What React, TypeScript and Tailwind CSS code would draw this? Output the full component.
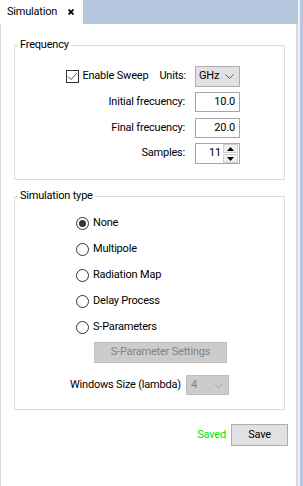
import React from 'react';

function Chevron({ color = '#5c5c5c' }: { color?: string }) {
  return (
    <svg width="9" height="5" viewBox="0 0 9 5" className="shrink-0">
      <polyline points="0.5,0.5 4.5,4.5 8.5,0.5" fill="none" stroke={color} strokeWidth="1" />
    </svg>
  );
}

function Radio({ label, checked = false }: { label: string; checked?: boolean }) {
  return (
    <div className="flex items-center h-[16px]">
      <span className="w-[13px] h-[13px] rounded-full border border-[#333333] bg-white flex items-center justify-center">
        {checked && <span className="w-[7px] h-[7px] rounded-full bg-[#333333]" />}
      </span>
      <span className="ml-[4px]">{label}</span>
    </div>
  );
}

function FieldRow({ label, value }: { label: string; value: string }) {
  return (
    <div className="flex items-center justify-end h-[20px]">
      <span className="mr-[10px]">{label}</span>
      <div className="w-[45px] h-[20px] border border-[#a6a6a6] bg-white flex items-center justify-end pr-[4px]">
        {value}
      </div>
    </div>
  );
}

export default function App() {
  return (
    <div className="w-[303px] h-[486px] flex bg-[#b4c7de] text-[11px] tracking-[-0.2px] text-black font-['Roboto',sans-serif] overflow-hidden">
      <div className="w-[298px] flex flex-col">
        {/* Tab bar */}
        <div className="h-[24px] flex shrink-0">
          <div className="w-[83px] bg-white flex items-center pl-[7px]">
            <span>Simulation</span>
            <svg width="6" height="6" viewBox="0 0 6 6" className="ml-[11px]">
              <path d="M0.5 0.5 L5.5 5.5 M5.5 0.5 L0.5 5.5" stroke="#000" strokeWidth="1.8" />
            </svg>
          </div>
        </div>

        {/* Panel */}
        <div className="flex-1 bg-white border-l border-r-2 border-[#d9d9d9] pt-[13px] pl-[13px] pr-[11px] flex flex-col">
          <fieldset className="border border-[#dcdcdc]">
            <legend className="ml-[3px] px-[2px] leading-[16px]">Frequency</legend>
            <div className="pt-[13px] pb-[15px] pr-[44px] flex flex-col gap-[5px]">
              <div className="flex items-center justify-end h-[21px]">
                <span className="w-[13px] h-[13px] border border-[#333333] bg-white flex items-center justify-center">
                  <svg width="11" height="9" viewBox="0 0 11 9">
                    <polyline points="1,4.5 4,7.5 10,1" fill="none" stroke="#555" strokeWidth="1" />
                  </svg>
                </span>
                <span className="ml-[3px]">Enable Sweep</span>
                <span className="ml-[11px]">Units:</span>
                <div className="ml-[9px] w-[45px] h-[21px] bg-[#e1e1e1] border border-[#adadad] flex items-center justify-between pl-[3px] pr-[5px]">
                  <span>GHz</span>
                  <Chevron />
                </div>
              </div>
              <FieldRow label="Initial frecuency:" value="10.0" />
              <div className="mt-[1px]">
                <FieldRow label="Final frecuency:" value="20.0" />
              </div>
              <div className="flex items-center justify-end h-[21px]">
                <span className="mr-[10px]">Samples:</span>
                <div className="w-[45px] h-[21px] border border-[#a6a6a6] bg-white flex items-center justify-end pr-[1px]">
                  <span className="mr-[2px]">11</span>
                  <div className="w-[15px] h-[19px] flex flex-col gap-[1px]">
                    <div className="flex-1 bg-[#f0f0f0] border border-[#cfcfcf] flex items-center justify-center">
                      <svg width="7" height="4" viewBox="0 0 7 4">
                        <polygon points="3.5,0 7,4 0,4" fill="#000" />
                      </svg>
                    </div>
                    <div className="flex-1 bg-[#f0f0f0] border border-[#cfcfcf] flex items-center justify-center">
                      <svg width="7" height="4" viewBox="0 0 7 4">
                        <polygon points="0,0 7,0 3.5,4" fill="#000" />
                      </svg>
                    </div>
                  </div>
                </div>
              </div>
            </div>
          </fieldset>

          <fieldset className="border border-[#dcdcdc] mt-[8px]">
            <legend className="ml-[3px] px-[2px] leading-[16px]">Simulation type</legend>
            <div className="pt-[11px] pb-[14px] flex flex-col">
              <div className="pl-[61px] flex flex-col gap-[10px]">
                <Radio label="None" checked />
                <Radio label="Multipole" />
                <Radio label="Radiation Map" />
                <Radio label="Delay Process" />
                <Radio label="S-Parameters" />
              </div>
              <div className="pl-[79px] mt-[7px]">
                <div className="w-[133px] h-[21px] bg-[#cccccc] border border-[#bfbfbf] text-[#838383] flex items-center justify-center">
                  S-Parameter Settings
                </div>
              </div>
              <div className="mt-[12px] flex items-center justify-center">
                <span>Windows Size (lambda)</span>
                <div className="ml-[5px] w-[43px] h-[20px] bg-[#cccccc] border border-[#bfbfbf] text-[#838383] flex items-center justify-between pl-[4px] pr-[5px]">
                  <span>4</span>
                  <Chevron color="#a8a8a8" />
                </div>
              </div>
            </div>
          </fieldset>

          <div className="mt-[14px] flex items-center justify-end -mr-[3px]">
            <span className="text-[#00e600] mr-[5px]">Saved</span>
            <div className="w-[57px] h-[22px] bg-[#e1e1e1] border border-[#adadad] flex items-center justify-center">
              Save
            </div>
          </div>
        </div>
      </div>
      <div className="w-[2px] bg-[#eef2f7]" />
    </div>
  );
}
